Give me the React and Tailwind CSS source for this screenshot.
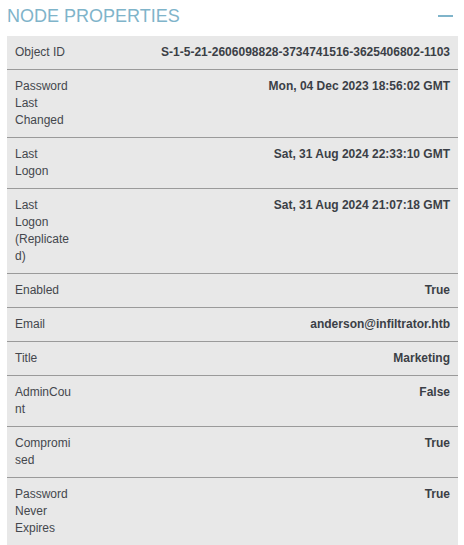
import React from 'react';

const rows = [
  { label: 'Object ID', value: 'S-1-5-21-2606098828-3734741516-3625406802-1103' },
  { label: 'Password Last Changed', value: 'Mon, 04 Dec 2023 18:56:02 GMT' },
  { label: 'Last Logon', value: 'Sat, 31 Aug 2024 22:33:10 GMT' },
  { label: 'Last Logon (Replicated)', value: 'Sat, 31 Aug 2024 21:07:18 GMT' },
  { label: 'Enabled', value: 'True' },
  { label: 'Email', value: 'anderson@infiltrator.htb' },
  { label: 'Title', value: 'Marketing' },
  { label: 'AdminCount', value: 'False' },
  { label: 'Compromised', value: 'True' },
  { label: 'Password Never Expires', value: 'True' },
];

const App = () => {
  return (
    <div className="w-[464px] h-[545px] overflow-hidden bg-white" style={{ fontFamily: '"Liberation Sans", Arial, sans-serif' }}>
      {/* header */}
      <div className="flex items-center justify-between pl-[7px] pr-[11px] h-[31px] pt-[1px]">
        <span className="text-[18px] text-[#7fb4ca] leading-none">NODE PROPERTIES</span>
        <span className="block w-[15px] h-[2px] bg-[#7fb4ca]"></span>
      </div>

      {/* properties table */}
      <table className="ml-[7px] mt-[5px] w-[451px] border-collapse bg-[#e8e8e8] text-[12px] leading-[17px]">
        <tbody>
          {rows.map((row, i) => (
            <tr key={i} className={i < rows.length - 1 ? 'border-b border-[#9a9a9a]' : ''}>
              <td className="align-top px-2 py-2 w-[74px] text-[#44474d]">
                <div className="w-[58px] break-words">{row.label}</div>
              </td>
              <td className="align-top px-2 py-2 text-right font-bold text-[#3b3f46]">{row.value}</td>
            </tr>
          ))}
        </tbody>
      </table>
    </div>
  );
};

export default App;
